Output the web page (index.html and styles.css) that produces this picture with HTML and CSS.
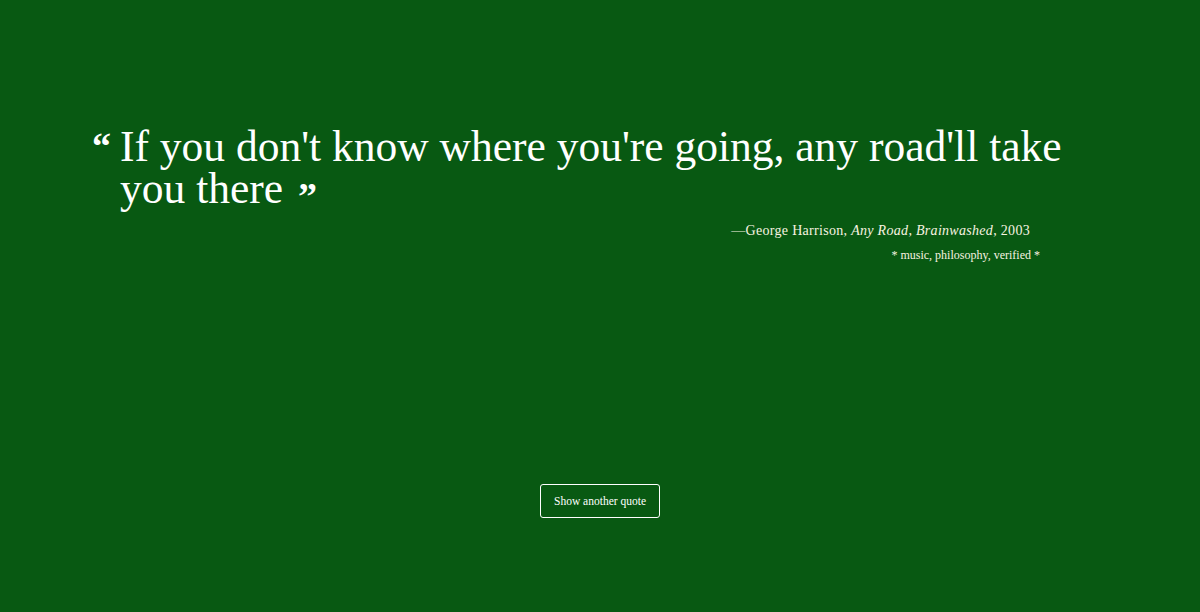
FILE: index.html
```html
<!DOCTYPE html>
<html>
<head>
<meta charset="utf-8">
<link rel="stylesheet" href="styles.css">
</head>
<body>
<main class="page">
  <section class="quote-box">
    <blockquote class="quote">
      <span class="mark open">&ldquo;</span>If you don't know where you're going, any road'll take you there<span class="mark close">&rdquo;</span>
    </blockquote>
    <p class="author">&mdash;George Harrison, <em>Any Road</em>, <em>Brainwashed</em>, 2003</p>
    <p class="tags">* music, philosophy, verified *</p>
  </section>
  <div class="actions">
    <button class="btn">Show another quote</button>
  </div>
</main>
</body>
</html>
```

FILE: styles.css
```css
html, body {
  margin: 0;
  padding: 0;
  height: 100%;
}
body {
  background: #085912;
  color: #ffffff;
  font-family: "Liberation Serif", "Times New Roman", serif;
}
.page {
  display: flex;
  flex-direction: column;
  height: 612px;
  box-sizing: border-box;
  padding-top: 125px;
}
.quote-box {
  margin-left: 120px;
  width: 960px;
}
.quote {
  margin: 0;
  font-size: 43.5px;
  line-height: 42px;
  position: relative;
}
.mark {
  font-size: 38px;
  font-weight: bold;
  line-height: 38px;
}
.open {
  position: absolute;
  left: -28px;
  top: 2px;
}
.close {
  margin-left: 15px;
  line-height: 0;
  vertical-align: -6px;
}
.author {
  margin: 14px 50px 0 0;
  text-align: right;
  font-size: 14px;
  line-height: 16px;
  color: #f7f3e0;
  letter-spacing: 0.3px;
}
.tags {
  margin: 9px 40px 0 0;
  text-align: right;
  font-size: 12px;
  line-height: 14px;
  color: #f7f3e0;
}
.actions {
  margin-top: auto;
  margin-bottom: 94px;
  display: flex;
  justify-content: center;
}
.btn {
  background: transparent;
  color: #fff;
  border: 1.5px solid #fff;
  border-radius: 3px;
  width: 120px;
  height: 34px;
  font-family: inherit;
  font-size: 11.5px;
  cursor: pointer;
}
```
